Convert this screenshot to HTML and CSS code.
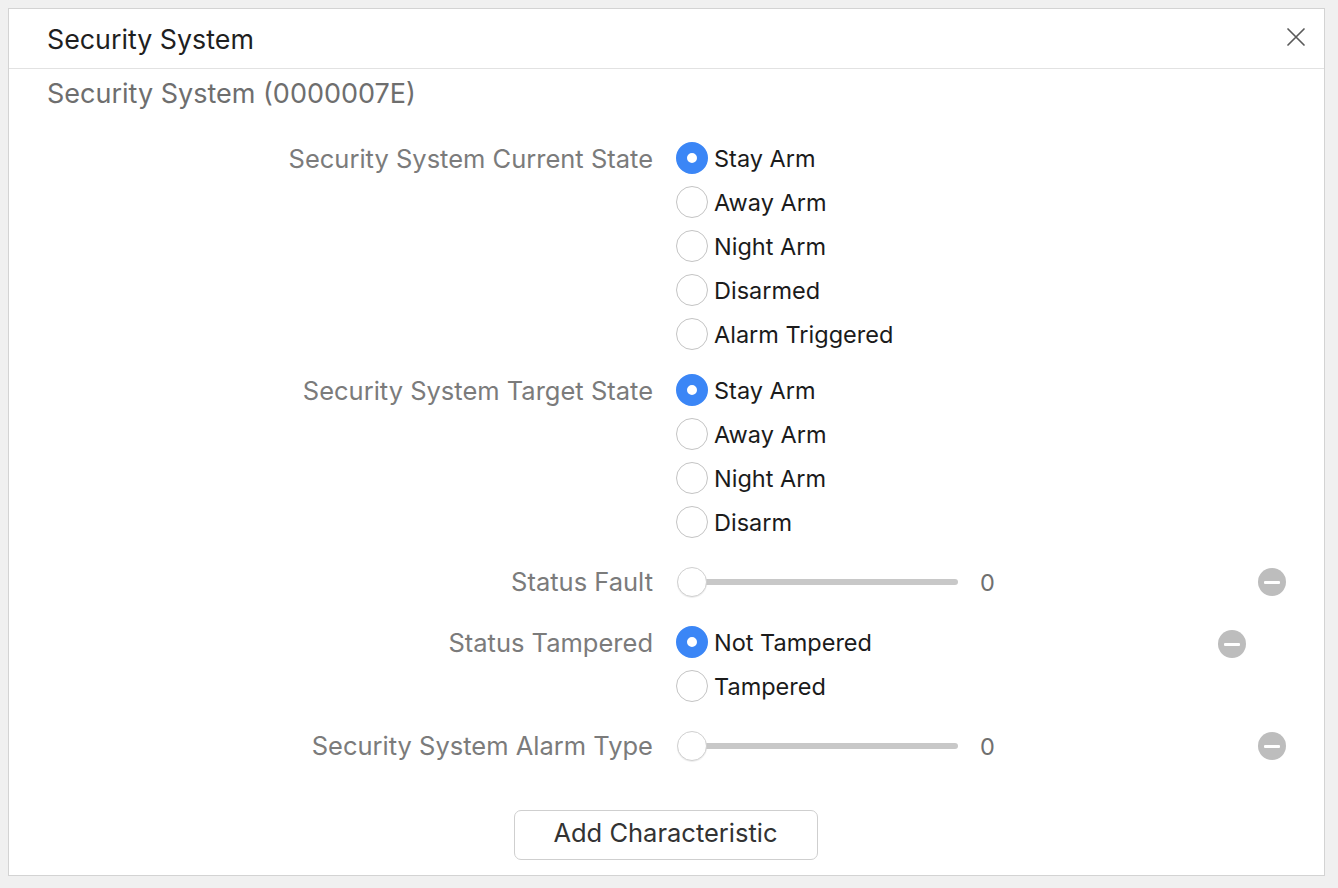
FILE: index.html
```html
<!DOCTYPE html>
<html>
<head>
<meta charset="utf-8">
<link rel="stylesheet" href="styles.css">
</head>
<body>
<div class="dialog">
  <div class="header">
    <div class="title">Security System</div>
    <button class="close" aria-label="Close">
      <svg width="20" height="20" viewBox="0 0 20 20"><path d="M2 2 L18 18 M18 2 L2 18" stroke="#5a5a5a" stroke-width="1.7" stroke-linecap="round" fill="none"/></svg>
    </button>
  </div>
  <div class="subtitle">Security System (0000007E)</div>

  <div class="form">
    <div class="row">
      <div class="label">Security System Current State</div>
      <div class="control radios">
        <label class="radio checked"><span class="dot"></span>Stay Arm</label>
        <label class="radio"><span class="dot"></span>Away Arm</label>
        <label class="radio"><span class="dot"></span>Night Arm</label>
        <label class="radio"><span class="dot"></span>Disarmed</label>
        <label class="radio"><span class="dot"></span>Alarm Triggered</label>
      </div>
    </div>

    <div class="row">
      <div class="label">Security System Target State</div>
      <div class="control radios">
        <label class="radio checked"><span class="dot"></span>Stay Arm</label>
        <label class="radio"><span class="dot"></span>Away Arm</label>
        <label class="radio"><span class="dot"></span>Night Arm</label>
        <label class="radio"><span class="dot"></span>Disarm</label>
      </div>
    </div>

    <div class="row slider-row">
      <div class="label">Status Fault</div>
      <div class="control slider-control">
        <div class="slider"><div class="track"></div><div class="thumb"></div></div>
        <div class="value">0</div>
      </div>
      <button class="remove" aria-label="Remove"><span></span></button>
    </div>

    <div class="row">
      <div class="label">Status Tampered</div>
      <div class="control radios">
        <label class="radio checked"><span class="dot"></span>Not Tampered</label>
        <label class="radio"><span class="dot"></span>Tampered</label>
      </div>
      <button class="remove remove-inset" aria-label="Remove"><span></span></button>
    </div>

    <div class="row slider-row">
      <div class="label">Security System Alarm Type</div>
      <div class="control slider-control">
        <div class="slider"><div class="track"></div><div class="thumb"></div></div>
        <div class="value">0</div>
      </div>
      <button class="remove" aria-label="Remove"><span></span></button>
    </div>
  </div>

  <div class="actions">
    <button class="add">Add Characteristic</button>
  </div>
</div>
</body>
</html>
```
FILE: styles.css
```css
* { box-sizing: border-box; }

html, body {
  margin: 0;
  padding: 0;
  background: #f0f0f0;
  font-family: "Inter", "Liberation Sans", sans-serif;
}

.dialog {
  margin: 8px 0 0 8px;
  width: 1317px;
  background: #ffffff;
  border: 1px solid #d3d3d3;
  padding-bottom: 15px;
}

.header {
  height: 60px;
  border-bottom: 1px solid #e2e2e2;
  display: flex;
  align-items: center;
  padding-left: 38px;
  padding-right: 18px;
}

.title {
  flex: 1;
  font-size: 26.8px;
  color: #1f1f1f;
  line-height: 59px;
  padding-top: 1px;
}

.close {
  width: 20px;
  height: 20px;
  padding: 0;
  border: 0;
  background: none;
  display: flex;
  margin-top: -4px;
}

.subtitle {
  margin-top: 7px;
  padding-left: 38px;
  font-size: 27px;
  line-height: 36px;
  color: #6e6e6e;
}

.form {
  margin-top: 24px;
  display: flex;
  flex-direction: column;
  gap: 12px;
}

.row {
  display: flex;
  align-items: flex-start;
}

.label {
  width: 644px;
  flex: none;
  text-align: right;
  font-size: 25.5px;
  line-height: 46px;
  color: #7b7b7b;
}

.control {
  margin-left: 23px;
}

.radios {
  display: flex;
  flex-direction: column;
}

.radio {
  height: 44px;
  display: flex;
  align-items: center;
  font-size: 23.5px;
  color: #1b1b1b;
}

.dot {
  width: 32px;
  height: 32px;
  border-radius: 50%;
  border: 1px solid #c4c4c4;
  background: #fff;
  margin-right: 6px;
  flex: none;
}

.radio.checked .dot {
  border: 11px solid #3b86f6;
  background: #fff;
}

.slider-row {
  height: 52px;
  align-items: center;
}

.slider-row .label {
  line-height: 52px;
}

.slider-control {
  display: flex;
  align-items: center;
}

.slider {
  position: relative;
  width: 282px;
  height: 32px;
  display: flex;
  align-items: center;
}

.track {
  width: 100%;
  height: 6px;
  margin-left: 2px;
  border-radius: 3px;
  background: #c8c8c8;
}

.thumb {
  position: absolute;
  left: 1px;
  top: 1px;
  width: 30px;
  height: 30px;
  border-radius: 50%;
  background: #fff;
  border: 1px solid #d0d0d0;
  box-shadow: 0 1px 1px rgba(0,0,0,0.08);
}

.value {
  margin-left: 22px;
  font-size: 23.5px;
  color: #707070;
}

.remove {
  margin-left: auto;
  margin-right: 38px;
  width: 28px;
  height: 28px;
  border-radius: 50%;
  border: 0;
  padding: 0;
  background: #bdbdbd;
  display: flex;
  align-items: center;
  justify-content: center;
  flex: none;
}

.remove span {
  width: 16px;
  height: 3px;
  background: #fff;
  border-radius: 1px;
}

.remove-inset {
  margin-right: 78px;
  margin-top: 10px;
}

.actions {
  margin-top: 38px;
  display: flex;
  justify-content: center;
}

.add {
  width: 304px;
  height: 50px;
  margin-left: -2px;
  border: 1px solid #cfcfcf;
  border-radius: 7px;
  background: #fff;
  font-family: "Inter", "Liberation Sans", sans-serif;
  font-size: 25.5px;
  line-height: 1;
  color: #333;
  padding: 0 0 5px 0;
}
```
